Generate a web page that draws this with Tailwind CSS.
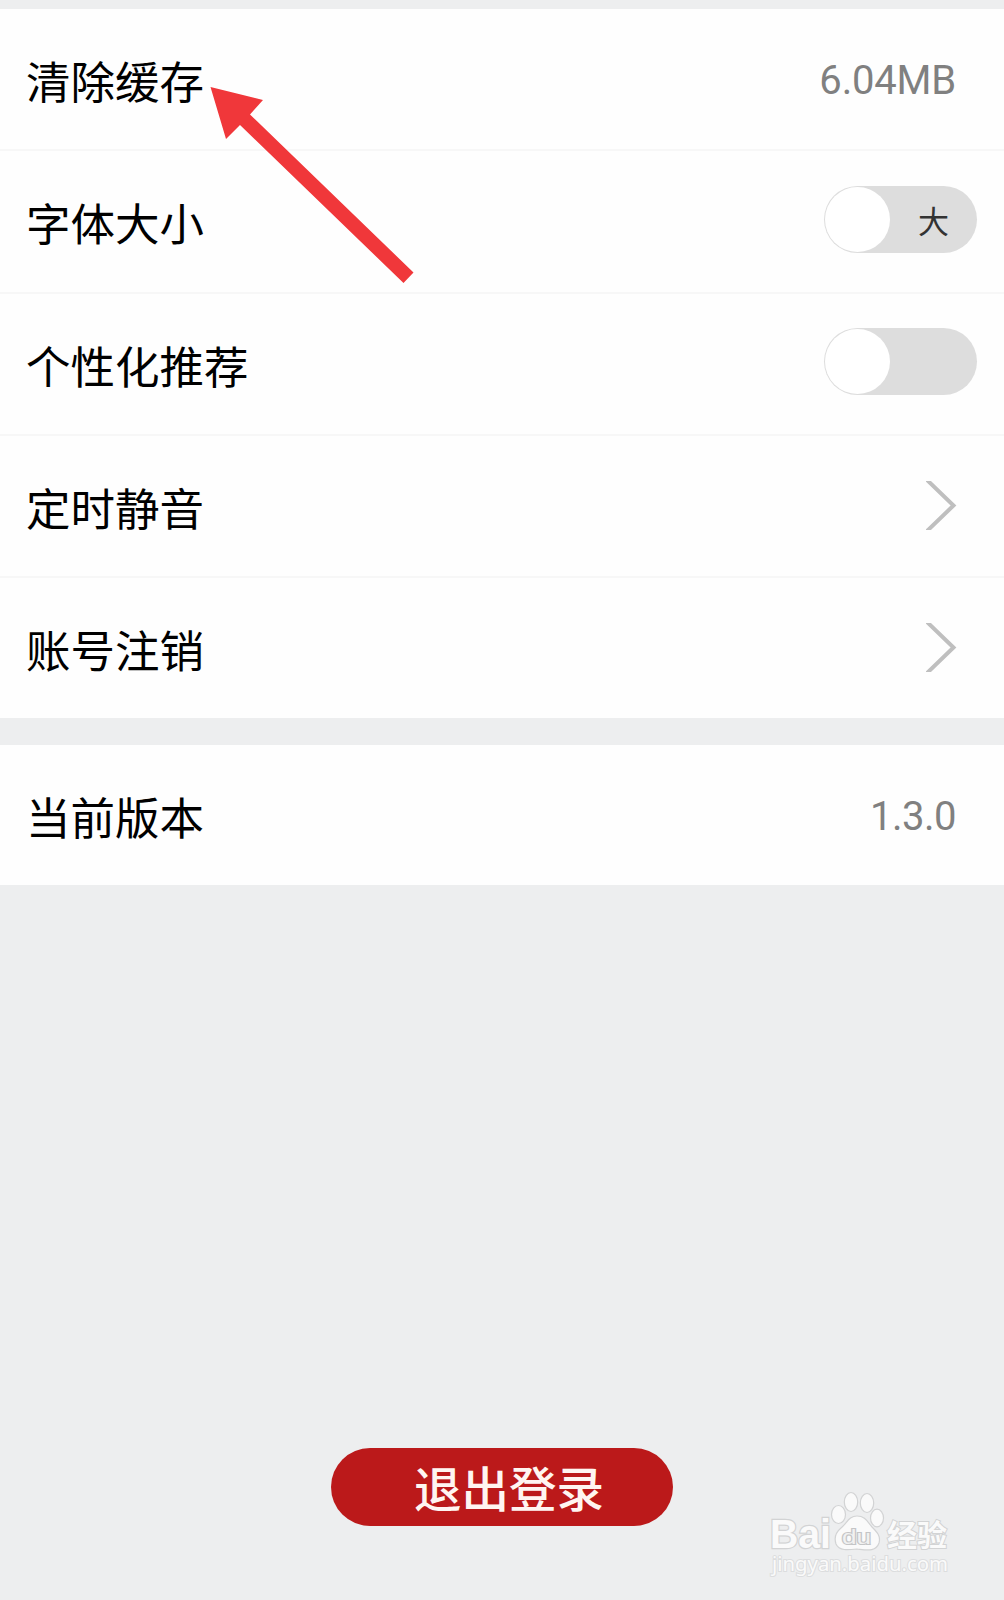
<!DOCTYPE html>
<html lang="zh-CN">
<head>
<meta charset="utf-8">
<title>设置</title>
<script src="https://cdn.jsdelivr.net/npm/@tailwindcss/browser@4"></script>
</head>
<body class="relative flex h-[1600px] w-[1004px] flex-col overflow-hidden bg-[#edeeef] pt-[9px] font-['Noto_Sans_CJK_SC',sans-serif] text-[44.5px] leading-[66px] text-black">
  <main class="bg-[#fefefe]">
    <div class="flex h-[142px] items-center justify-between border-b-2 border-[#f7f7f7] pr-[48px] pl-[26px]">
      <span class="pt-px">清除缓存</span>
      <span class="pt-[4px] font-[Roboto,sans-serif] text-[40px] tracking-[-0.2px] text-[#808080]">6.04MB</span>
    </div>
    <div class="flex h-[143px] items-center justify-between border-b-2 border-[#f7f7f7] pr-[27px] pl-[26px]">
      <span>字体大小</span>
      <div class="mb-1 flex h-[67px] w-[153px] items-center justify-between rounded-full bg-[#ddd] p-px pr-[28px]">
        <i class="size-[65px] rounded-full bg-white"></i>
        <span class="text-[31px] leading-[40px] text-[#333]">大</span>
      </div>
    </div>
    <div class="flex h-[142px] items-center justify-between border-b-2 border-[#f7f7f7] pr-[27px] pl-[26px]">
      <span class="pt-px">个性化推荐</span>
      <div class="mb-[5px] flex h-[67px] w-[153px] items-center rounded-full bg-[#ddd] p-px">
        <i class="size-[65px] rounded-full bg-white"></i>
      </div>
    </div>
    <div class="flex h-[142px] items-center justify-between border-b-2 border-[#f7f7f7] pr-[47px] pl-[26px]">
      <span class="pt-px">定时静音</span>
      <svg class="mb-[2px] h-[49px] w-[31px]" viewBox="0 0 31 49" fill="none" stroke="#bfbfbf" stroke-width="4"><path d="M0-2 27.500 24.500 0 51"/></svg>
    </div>
    <div class="flex h-[140px] items-center justify-between pr-[47px] pl-[26px]">
      <span class="pt-[2px]">账号注销</span>
      <svg class="mb-px h-[49px] w-[31px]" viewBox="0 0 31 49" fill="none" stroke="#bfbfbf" stroke-width="4"><path d="M0-2 27.500 24.500 0 51"/></svg>
    </div>
  </main>
  <section class="mt-[27px] flex h-[140px] items-center justify-between bg-[#fefefe] pr-[48px] pl-[26px]">
    <span class="pt-px">当前版本</span>
    <span class="pt-[3px] font-[Roboto,sans-serif] text-[40px] tracking-[-0.5px] text-[#808080]">1.3.0</span>
  </section>
  <button class="mt-auto mb-[74px] ml-[331px] flex h-[78px] w-[342px] items-center justify-center rounded-full bg-[#bb191a] pb-px pl-[14px] text-[47.5px] font-medium text-[#fff5f1]">退出登录</button>

  <svg class="absolute top-0 left-0 h-[300px] w-[430px]" viewBox="0 0 430 300" fill="#f0373a"><path d="M210.500 87 263 100 250 114.500 413.500 272.500 403.500 283 240 125 226 139Z"/></svg>

  <svg class="absolute top-[1470px] left-[750px] h-[120px] w-[220px]" viewBox="0 0 220 120" fill="#fafafa" stroke="#d2d3d4" stroke-width="1.200">
    <text x="20" y="78" font-size="40" textLength="61" lengthAdjust="spacingAndGlyphs" stroke-width="2.500" paint-order="stroke" font-family="Liberation Sans, sans-serif" font-weight="700">Bai</text>
    <ellipse cx="88.500" cy="44.500" rx="7" ry="9"/>
    <ellipse cx="101" cy="32" rx="6.700" ry="9.500"/>
    <ellipse cx="117" cy="33" rx="6.700" ry="9.500"/>
    <ellipse cx="127" cy="48" rx="6.500" ry="8.800"/>
    <path d="M107 46C99 46 97 53 91 58C85 63 84 68 86 74C89 81 98 80 107 79C117 80 126 82 129 73C131 66 127 62 122 57C117 51 115 46 107 46Z"/>
    <text x="92" y="74" font-size="21" textLength="29" lengthAdjust="spacingAndGlyphs" fill="#f1f1f1" stroke="#c4c5c6" stroke-width="2.200" paint-order="stroke" font-family="Liberation Sans, sans-serif">du</text>
    <text x="137" y="76" font-size="30" textLength="60" lengthAdjust="spacingAndGlyphs" stroke-width="2" paint-order="stroke" font-family="Noto Sans CJK SC, sans-serif" font-weight="700">经验</text>
    <text x="22" y="101" font-size="20" textLength="176" lengthAdjust="spacingAndGlyphs" stroke="#dcddde" stroke-width="2" paint-order="stroke" font-family="Noto Sans, sans-serif">jingyan.baidu.com</text>
  </svg>
</body>
</html>
